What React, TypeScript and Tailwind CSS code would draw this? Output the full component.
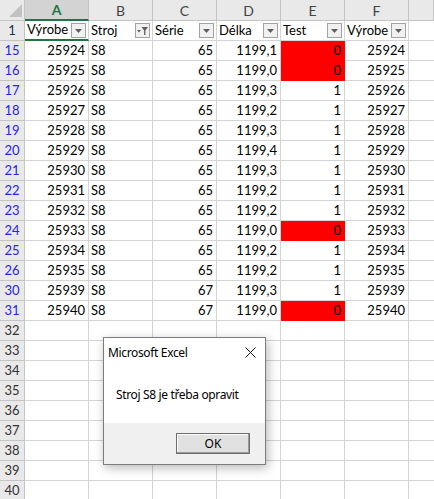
import React from "react";

type Row = {
  n: number;
  a: string;
  c: string;
  d: string;
  e: string;
  bad: boolean;
};

const rows: Row[] = [
  { n: 15, a: "25924", c: "65", d: "1199,1", e: "0", bad: true },
  { n: 16, a: "25925", c: "65", d: "1199,0", e: "0", bad: true },
  { n: 17, a: "25926", c: "65", d: "1199,3", e: "1", bad: false },
  { n: 18, a: "25927", c: "65", d: "1199,2", e: "1", bad: false },
  { n: 19, a: "25928", c: "65", d: "1199,3", e: "1", bad: false },
  { n: 20, a: "25929", c: "65", d: "1199,4", e: "1", bad: false },
  { n: 21, a: "25930", c: "65", d: "1199,3", e: "1", bad: false },
  { n: 22, a: "25931", c: "65", d: "1199,2", e: "1", bad: false },
  { n: 23, a: "25932", c: "65", d: "1199,2", e: "1", bad: false },
  { n: 24, a: "25933", c: "65", d: "1199,0", e: "0", bad: true },
  { n: 25, a: "25934", c: "65", d: "1199,2", e: "1", bad: false },
  { n: 26, a: "25935", c: "65", d: "1199,2", e: "1", bad: false },
  { n: 30, a: "25939", c: "67", d: "1199,3", e: "1", bad: false },
  { n: 31, a: "25940", c: "67", d: "1199,0", e: "0", bad: true },
];

const empty = [32, 33, 34, 35, 36, 37, 38, 39, 40];

const cell = "w-[64px] shrink-0 h-full border-r border-b border-[#d4d4d4] flex items-center overflow-hidden whitespace-nowrap";
const rowHead = "w-[25px] shrink-0 h-full border-r border-b border-[#c4c4c4] bg-[#e9e9e9] flex items-center justify-center";

function Dropdown({ filtered }: { filtered?: boolean }) {
  return (
    <div className="absolute right-[2px] top-[2px] w-[15px] h-[15px] border border-[#a3a3a3] bg-[#f1f1f1] flex items-center justify-center">
      {filtered ? (
        <svg width="13" height="13" viewBox="0 0 13 13">
          <polygon points="1,6 5,6 3,8.5" fill="#5f5f5f" />
          <polygon points="5.5,3 12,3 9.4,6.5 9.4,11 8.1,11 8.1,6.5" fill="#5f5f5f" />
        </svg>
      ) : (
        <svg width="9" height="6" viewBox="0 0 9 6">
          <polygon points="1,1 8,1 4.5,5" fill="#5f5f5f" />
        </svg>
      )}
    </div>
  );
}

function HeadCell({ label, filtered }: { label: string; filtered?: boolean }) {
  return (
    <div className={`${cell} relative pl-[2px]`}>
      <span>{label}</span>
      <Dropdown filtered={filtered} />
    </div>
  );
}

export default function App() {
  return (
    <div className="relative w-[434px] h-[499px] overflow-hidden bg-white text-[13px] text-black font-['Lato',sans-serif]">
      {/* column letters */}
      <div className="flex h-[21px]">
        <div className="w-[25px] shrink-0 h-full border-r border-b border-[#c4c4c4] bg-[#e9e9e9] relative">
          <svg className="absolute right-[2px] bottom-[3px]" width="13" height="13" viewBox="0 0 13 13">
            <polygon points="13,0 13,13 0,13" fill="#c2c2c2" />
          </svg>
        </div>
        <div className="w-[64px] shrink-0 h-full border-r border-[#c4c4c4] border-b-2 border-b-[#217346] bg-[#d3d3d3] flex items-center justify-center text-[#217346] font-bold text-[14px]">
          A
        </div>
        {["B", "C", "D", "E", "F", ""].map((l, i) => (
          <div
            key={i}
            className={`${i === 5 ? "flex-1" : "w-[64px] shrink-0"} h-full border-r border-b border-[#c4c4c4] bg-[#e9e9e9] flex items-center justify-center text-[#444] text-[14px]`}
          >
            {l}
          </div>
        ))}
      </div>

      {/* header row 1 */}
      <div className="flex h-[20px]">
        <div className={`${rowHead} text-[#1f2d4f]`}>1</div>
        <div className={`${cell} relative pl-[2px] border-b-2 border-b-[#217346]`}>
          <span>Výrobe</span>
          <Dropdown />
        </div>
        <HeadCell label="Stroj" filtered />
        <HeadCell label="Série" />
        <HeadCell label="Délka" />
        <HeadCell label="Test" />
        <HeadCell label="Výrobe" />
        <div className="flex-1 h-full border-b border-[#d4d4d4]" />
      </div>

      {/* data rows */}
      {rows.map((r) => (
        <div key={r.n} className="flex h-[20px]">
          <div className={`${rowHead} text-[#2424f0]`}>{r.n}</div>
          <div className={`${cell} justify-end pr-[3px]`}>{r.a}</div>
          <div className={`${cell} pl-[2px]`}>S8</div>
          <div className={`${cell} justify-end pr-[3px]`}>{r.c}</div>
          <div className={`${cell} justify-end pr-[3px]`}>{r.d}</div>
          <div className={`${cell} justify-end pr-[3px] ${r.bad ? "bg-[#ff0000] border-[#ff0000]" : ""}`}>{r.e}</div>
          <div className={`${cell} justify-end pr-[3px]`}>{r.a}</div>
          <div className="flex-1 h-full border-b border-[#d4d4d4]" />
        </div>
      ))}

      {/* empty rows */}
      {empty.map((n) => (
        <div key={n} className="flex h-[20px]">
          <div className={`${rowHead} text-[#333]`}>{n}</div>
          {[0, 1, 2, 3, 4, 5].map((i) => (
            <div key={i} className={cell} />
          ))}
          <div className="flex-1 h-full border-b border-[#d4d4d4]" />
        </div>
      ))}

      {/* message box */}
      <div className="absolute left-[103px] top-[337px] w-[163px] h-[128px] bg-white border border-[#7c7c7c] shadow-[2px_3px_10px_rgba(0,0,0,0.28)] flex flex-col font-['Noto_Sans',sans-serif] text-[12px] tracking-[-0.35px]">
        <div className="h-[29px] flex items-center justify-between pl-[4px] pr-[9px]">
          <span>Microsoft Excel</span>
          <svg width="11" height="11" viewBox="0 0 11 11">
            <path d="M0.5 0.5 L10.5 10.5 M10.5 0.5 L0.5 10.5" stroke="#111" strokeWidth="1" />
          </svg>
        </div>
        <div className="h-[56px] flex items-center pl-[12px]">Stroj S8 je třeba opravit</div>
        <div className="flex-1 bg-[#f0f0f0] flex justify-end items-start pt-[10px] pr-[15px]">
          <button className="w-[74px] h-[21px] bg-[#e1e1e1] border border-[#6e6e6e] shadow-[inset_-1px_-1px_0_#9a9a9a,inset_1px_1px_0_#fdfdfd] flex items-center justify-center text-[12px] leading-none tracking-normal">
            OK
          </button>
        </div>
      </div>
    </div>
  );
}
